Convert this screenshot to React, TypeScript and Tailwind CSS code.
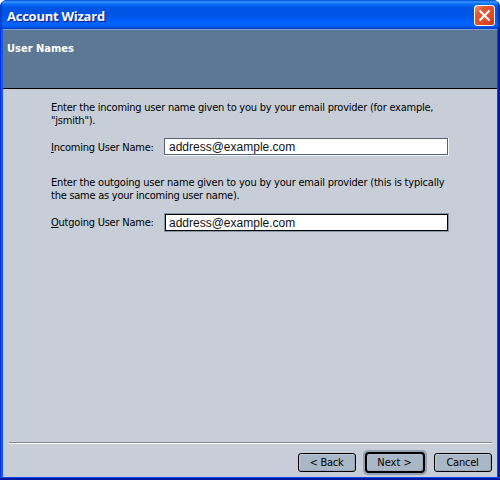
import React, { useState } from "react";

interface UserNameFieldProps {
  id: string;
  accessKey: string;
  label: string;
  value: string;
  focused?: boolean;
  onChange: (value: string) => void;
}

function UserNameField({ id, accessKey, label, value, focused, onChange }: UserNameFieldProps) {
  return (
    <div className="flex h-5 items-start">
      <label htmlFor={id} className="mt-[3px] w-[113px] whitespace-nowrap">
        <span className="underline underline-offset-1">{accessKey}</span>
        {label}
      </label>
      <div className={focused ? "border border-[#8798a9]" : "border-r border-b border-[#f2f5f8]"}>
        <input
          id={id}
          type="text"
          value={value}
          onChange={(e) => onChange(e.target.value)}
          className={`block h-[17px] border bg-white pt-px font-['Liberation_Sans',sans-serif] text-[12px] leading-[14px] tracking-normal text-[#111111] outline-none ${
            focused ? "w-[283px] border-black pl-[3px]" : "w-[284px] border-[#596273] pl-1"
          }`}
        />
      </div>
    </div>
  );
}

function WizardButton({ children, primary }: { children: React.ReactNode; primary?: boolean }) {
  if (primary) {
    return (
      <div className="rounded-[5px] bg-[#92a1b1] p-[2px]">
        <button className="block h-[21px] w-[60px] rounded-[4px] border-2 border-black bg-[#a9b7c7] pr-px leading-[16px] tracking-normal shadow-[inset_1px_1px_0_#b4c0ce,inset_-1px_-1px_0_#9caaba]">
          {children}
        </button>
      </div>
    );
  }
  return (
    <button className="block h-[19px] w-[58px] rounded-[3px] border border-black bg-[#a9b7c7] pr-px leading-[16px] shadow-[inset_1px_1px_0_#c0cad6,inset_-1px_-1px_0_#98a6b7]">
      {children}
    </button>
  );
}

export default function App() {
  const [incoming, setIncoming] = useState("address@example.com");
  const [outgoing, setOutgoing] = useState("address@example.com");

  return (
    <div className="h-[480px] w-[500px] bg-white">
      <div className="flex h-full flex-col overflow-hidden rounded-t-[7px] bg-[#0831d9] font-['DejaVu_Sans_Condensed','DejaVu_Sans',sans-serif] text-[11px] leading-[13px] tracking-[-0.23px] text-black">
        {/* Title bar */}
        <div className="flex h-[29px] shrink-0 items-start justify-between bg-[linear-gradient(#0058e6_0px,#3a93ff_2px,#0870f8_4px,#0055e5_8px,#0054e3_14px,#005bf5_20px,#0066ff_25px,#0054e8_27px,#0042c5_29px)] pr-[5px] pl-[7px] shadow-[inset_2px_0_1px_#0640c8,inset_-2px_0_1px_#0530b0]">
          <h1 className="mt-[8px] font-['Open_Sans','Noto_Sans',sans-serif] text-[13px] leading-[16px] font-bold tracking-[-0.25px] whitespace-nowrap text-white [text-shadow:1px_1px_0_#0a1883]">
            Account Wizard
          </h1>
          <button
            aria-label="Close"
            className="mt-[5px] flex h-[21px] w-[21px] items-center justify-center rounded-[3px] border border-white bg-[linear-gradient(135deg,#f0a088_0%,#e25a38_25%,#dc4a24_70%,#c03a14_100%)]"
          >
            <svg width="11" height="11" viewBox="0 0 11 11" stroke="white" strokeWidth="2.2">
              <path d="M0.5 0.5L10.5 10.5M10.5 0.5L0.5 10.5" />
            </svg>
          </button>
        </div>

        {/* Window frame */}
        <div className="flex min-h-0 flex-1 flex-col bg-[linear-gradient(90deg,#0831d9_0px,#0831d9_1px,#0a5cf0_1px,#0a5cf0_3px,transparent_3px,transparent_497px,#0a48ea_497px,#0a48ea_498px,#0019a8_498px)] px-[3px]">
          {/* Step header */}
          <div className="h-[60px] shrink-0 border-t border-b border-t-[#7d9fd5] border-b-black bg-[#5c7894] pt-[12px] pl-[4px] font-bold tracking-normal text-white">
            User Names
          </div>

          <div className="flex min-h-0 flex-1 flex-col bg-[#c7ced8]">
            <div className="flex-1 pt-[12px] pl-[48px]">
              <p className="h-[37px] whitespace-nowrap">
                Enter the incoming user name given to you by your email provider (for example,
                <br />
                "jsmith").
              </p>
              <UserNameField
                id="incoming"
                accessKey="I"
                label="ncoming User Name:"
                value={incoming}
                onChange={setIncoming}
              />
              <p className="mt-[18px] h-[37px] tracking-[-0.2px] whitespace-nowrap">
                Enter the outgoing user name given to you by your email provider (this is typically
                <br />
                <span className="tracking-[-0.25px]">the same as your incoming user name).</span>
              </p>
              <UserNameField
                id="outgoing"
                accessKey="O"
                label="utgoing User Name:"
                value={outgoing}
                focused
                onChange={setOutgoing}
              />
            </div>

            {/* Wizard buttons */}
            <div className="mr-[5px] ml-[6px] h-[35px] border-t border-[#7c8796]">
              <div className="flex items-center justify-end gap-[7px] border-t border-white pt-[6px]">
                <WizardButton>&lt; Back</WizardButton>
                <WizardButton primary>Next &gt;</WizardButton>
                <WizardButton>Cancel</WizardButton>
              </div>
            </div>
          </div>
        </div>
        <div className="h-[3px] shrink-0 border-t border-[#0a48ea] bg-[#0019a0]" />
      </div>
    </div>
  );
}
